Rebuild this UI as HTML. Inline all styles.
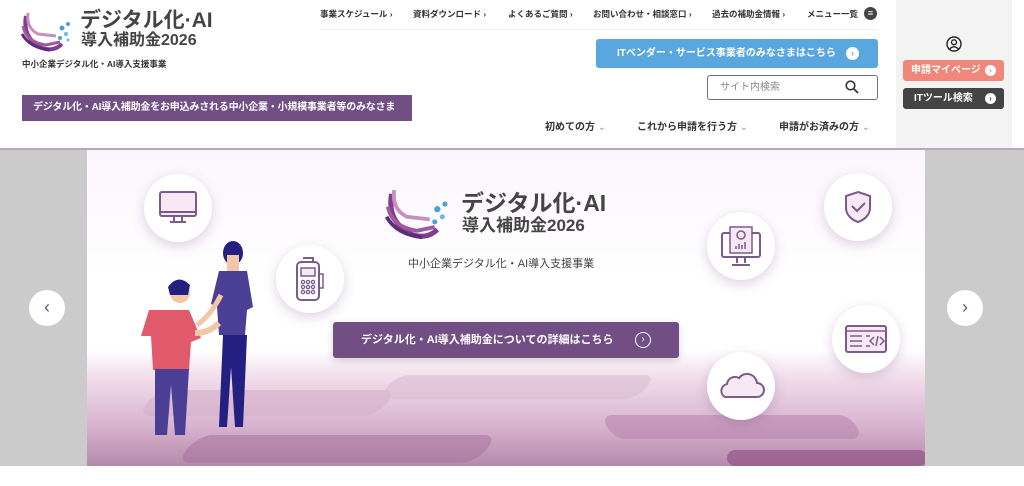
<!DOCTYPE html>
<html><head><meta charset="utf-8">
<style>
*{margin:0;padding:0;box-sizing:border-box}
body{width:1024px;height:486px;overflow:hidden;background:#fff;font-family:"Liberation Sans","Noto Sans CJK JP",sans-serif;color:#333;position:relative}
.a{position:absolute}
.top a{position:absolute;top:8px;font-size:8.5px;font-weight:bold;color:#333;white-space:nowrap}
.circ{position:absolute;background:#fff;border-radius:50%;box-shadow:0 4px 12px rgba(120,80,140,.25);display:flex;align-items:center;justify-content:center}
</style></head><body>
<svg class="a" style="left:20px;top:8px" width="52" height="46" viewBox="0 0 52 46">
<path d="M6 8 Q2 30 22 40 Q34 44 42 36" fill="none" stroke="#7d3f8f" stroke-width="4"/>
<path d="M3 18 Q6 34 26 37 L40 34" fill="none" stroke="#a0589e" stroke-width="3"/>
<path d="M8 5 Q6 20 18 26 L36 28" fill="none" stroke="#c88ec0" stroke-width="3"/>
<path d="M2 26 Q10 40 30 42" fill="none" stroke="#5a2e7a" stroke-width="3"/>
<circle cx="42" cy="20" r="2.5" fill="#4aa0d8"/><circle cx="48" cy="16" r="2" fill="#4aa0d8"/><circle cx="46" cy="26" r="2" fill="#6bbce6"/><circle cx="40" cy="30" r="2" fill="#4aa0d8"/><circle cx="48" cy="32" r="1.5" fill="#6bbce6"/>
</svg>
<div class="a" style="left:80px;top:9px;font-size:21px;font-weight:bold;color:#444;line-height:23px;white-space:nowrap">デジタル化·AI</div>
<div class="a" style="left:81px;top:32px;font-size:16px;font-weight:bold;color:#444;line-height:18px;white-space:nowrap">導入補助金2026</div>
<div class="a" style="left:22px;top:58px;font-size:8.5px;font-weight:bold;white-space:nowrap">中小企業デジタル化・AI導入支援事業</div>
<div class="a" style="left:22px;top:95px;width:390px;height:26px;background:#714e84;color:#fff;font-size:10px;letter-spacing:-0.2px;font-weight:bold;line-height:26px;padding-left:11px;white-space:nowrap;overflow:hidden">デジタル化・AI導入補助金をお申込みされる中小企業・小規模事業者等のみなさま</div>
<div class="top">
<a style="left:320px">事業スケジュール ›</a>
<a style="left:413px">資料ダウンロード ›</a>
<a style="left:508px">よくあるご質問 ›</a>
<a style="left:593px">お問い合わせ・相談窓口 ›</a>
<a style="left:712px">過去の補助金情報 ›</a>
<a style="left:807px">メニュー一覧</a>
</div>
<div class="a" style="left:864px;top:7px;width:13px;height:13px;border-radius:50%;background:#444;color:#fff;font-size:9px;text-align:center;line-height:13px">≡</div>
<div class="a" style="left:320px;top:29px;width:557px;height:1px;background:#eee"></div>
<div class="a" style="left:596px;top:39px;width:282px;height:29px;background:#5aa6df;border-radius:3px;color:#fff;font-size:10px;font-weight:bold;line-height:29px;padding-left:21px;white-space:nowrap">ITベンダー・サービス事業者のみなさまはこちら</div>
<div class="a" style="left:846px;top:47px;width:13px;height:13px;border-radius:50%;background:#fff;color:#5aa6df;font-size:9px;text-align:center;line-height:13px;font-weight:bold">›</div>
<div class="a" style="left:707px;top:75px;width:171px;height:25px;border:1px solid #7a6a85;border-radius:3px;font-size:10px;color:#888;line-height:23px;padding-left:12px">サイト内検索</div>
<svg class="a" style="left:845px;top:80px" width="14" height="14" viewBox="0 0 14 14"><circle cx="5.5" cy="5.5" r="4.3" fill="none" stroke="#333" stroke-width="1.6"/><path d="M9 9l4 4" stroke="#333" stroke-width="1.8"/></svg>
<div class="a" style="left:545px;top:118px;font-size:10px;font-weight:bold;white-space:nowrap">初めての方 <span style="color:#999;font-weight:normal">⌄</span></div>
<div class="a" style="left:637px;top:118px;font-size:10px;font-weight:bold;white-space:nowrap">これから申請を行う方 <span style="color:#999;font-weight:normal">⌄</span></div>
<div class="a" style="left:779px;top:118px;font-size:10px;font-weight:bold;white-space:nowrap">申請がお済みの方 <span style="color:#999;font-weight:normal">⌄</span></div>
<div class="a" style="left:896px;top:0;width:116px;height:148px;background:#f3f3f3"></div>
<svg class="a" style="left:946px;top:36px" width="16" height="16" viewBox="0 0 16 16"><circle cx="8" cy="8" r="7" fill="none" stroke="#222" stroke-width="1.4"/><circle cx="8" cy="6.3" r="2.5" fill="none" stroke="#222" stroke-width="1.3"/><path d="M3.5 13Q8 8.5 12.5 13" fill="none" stroke="#222" stroke-width="1.3"/></svg>
<div class="a" style="left:903px;top:60px;width:101px;height:21px;background:#f0877a;border-radius:3px;color:#fff;font-size:10px;font-weight:bold;line-height:21px;padding-left:8px">申請マイページ</div>
<div class="a" style="left:985px;top:65px;width:11px;height:11px;border-radius:50%;background:#fff;color:#f0877a;font-size:8px;text-align:center;line-height:11px;font-weight:bold">›</div>
<div class="a" style="left:903px;top:88px;width:101px;height:21px;background:#444;border-radius:3px;color:#fff;font-size:10px;font-weight:bold;line-height:21px;padding-left:11px">ITツール検索</div>
<div class="a" style="left:985px;top:93px;width:11px;height:11px;border-radius:50%;background:#fff;color:#444;font-size:8px;text-align:center;line-height:11px;font-weight:bold">›</div>
<div class="a" style="left:0;top:148px;width:1024px;height:2px;background:#b9a6c6"></div>
<div class="a" style="left:0;top:150px;width:1024px;height:316px;background:#cbcbcb"></div>
<div class="a" style="left:87px;top:150px;width:838px;height:316px;background:linear-gradient(#fbf6fb,#fff 40%);overflow:hidden">
 <div class="a" style="left:0;top:200px;width:838px;height:116px;background:linear-gradient(rgba(244,228,240,0),#f0dcea 25%,#d8b4cf 65%,#b58aab)"></div>
 <div class="a" style="left:60px;top:240px;width:240px;height:26px;background:#d6b0cc;border-radius:14px;transform:skewX(-40deg);opacity:.6"></div>
 <div class="a" style="left:300px;top:225px;width:260px;height:24px;background:#dcbcd4;border-radius:14px;transform:skewX(-40deg);opacity:.6"></div>
 <div class="a" style="left:520px;top:265px;width:250px;height:24px;background:#b47ea8;border-radius:14px;transform:skewX(30deg);opacity:.5"></div>
 <div class="a" style="left:100px;top:285px;width:300px;height:28px;background:#a4709a;border-radius:14px;transform:skewX(-40deg);opacity:.5"></div>
 <div class="a" style="left:640px;top:300px;width:200px;height:16px;background:#8a4a7e;border-radius:8px;opacity:.6"></div>
</div>
<div class="circ" style="left:144px;top:174px;width:68px;height:68px"><svg width="40" height="36" viewBox="0 0 40 36"><rect x="2" y="2" width="36" height="24" rx="2" fill="#f7e8f3" stroke="#7b5a8c" stroke-width="2"/><path d="M2 22h36M16 26v5M24 26v5M12 32h16" stroke="#7b5a8c" stroke-width="2"/></svg></div>
<div class="circ" style="left:276px;top:245px;width:68px;height:68px"><svg width="32" height="46" viewBox="0 0 32 46"><rect x="3" y="6" width="22" height="38" rx="4" fill="#fff" stroke="#7b5a8c" stroke-width="2"/><rect x="7" y="12" width="14" height="8" fill="#f7e8f3" stroke="#7b5a8c" stroke-width="1.5"/><path d="M9 2h10v4" fill="none" stroke="#7b5a8c" stroke-width="2"/><path d="M25 18h4v14h-4" fill="none" stroke="#7b5a8c" stroke-width="1.5"/><g fill="none" stroke="#7b5a8c" stroke-width="1.3"><circle cx="9" cy="26" r="1.6"/><circle cx="14" cy="26" r="1.6"/><circle cx="19" cy="26" r="1.6"/><circle cx="9" cy="31" r="1.6"/><circle cx="14" cy="31" r="1.6"/><circle cx="19" cy="31" r="1.6"/><circle cx="9" cy="36" r="1.6"/><circle cx="14" cy="36" r="1.6"/><circle cx="19" cy="36" r="1.6"/></g></svg></div>
<div class="circ" style="left:707px;top:212px;width:68px;height:68px"><svg width="42" height="42" viewBox="0 0 42 42"><rect x="2" y="8" width="38" height="24" rx="2" fill="#fff" stroke="#7b5a8c" stroke-width="2"/><rect x="10" y="2" width="22" height="26" fill="#f7e8f3" stroke="#7b5a8c" stroke-width="1.5"/><circle cx="21" cy="10" r="4" fill="none" stroke="#7b5a8c" stroke-width="1.5"/><path d="M16 24v-3M19 24v-5M22 24v-4M25 24v-7" stroke="#7b5a8c" stroke-width="1.5"/><path d="M17 32v6M25 32v6M12 40h18" stroke="#7b5a8c" stroke-width="2"/></svg></div>
<div class="circ" style="left:824px;top:173px;width:68px;height:68px"><svg width="28" height="34" viewBox="0 0 28 34"><path d="M14 2L26 6v12c0 7-6 12-12 14C8 30 2 25 2 18V6z" fill="#f7e8f3" stroke="#7b5a8c" stroke-width="2"/><path d="M8 16l5 5 8-8" fill="none" stroke="#7b5a8c" stroke-width="2"/></svg></div>
<div class="circ" style="left:832px;top:305px;width:68px;height:68px"><svg width="44" height="30" viewBox="0 0 44 30"><rect x="2" y="2" width="40" height="26" rx="2" fill="#f7e8f3" stroke="#7b5a8c" stroke-width="2"/><path d="M2 7h40M6 12h12M6 17h12M6 22h12M22 12h4M22 22h4M30 13l-4 4 4 4M36 13l4 4-4 4M34 12l-2 10" stroke="#7b5a8c" stroke-width="1.5" fill="none"/></svg></div>
<div class="circ" style="left:707px;top:352px;width:68px;height:68px"><svg width="48" height="26" viewBox="0 0 48 26"><path d="M8 24h32a7 7 0 0 0 0-14 10 10 0 0 0-18-5 8 8 0 0 0-12 6 7 7 0 0 0-2 13z" fill="#f7e8f3" stroke="#7b5a8c" stroke-width="2"/></svg></div>
<svg class="a" style="left:135px;top:235px" width="140" height="210" viewBox="0 0 140 210">
<ellipse cx="98" cy="18" rx="10" ry="12" fill="#232082"/><path d="M92 20h12v16h-12z" fill="#f1c7a8"/>
<path d="M84 36h28l6 36-6 3-2 25h-26l-2-28-6-3z" fill="#4a3f95"/><path d="M86 60q-10 20-24 30" stroke="#f1c7a8" stroke-width="5" fill="none"/>
<path d="M88 100h24l-4 92h-8l-4-60-4 60h-8z" fill="#232082"/>
<circle cx="45" cy="58" r="10" fill="#f1c7a8"/><path d="M33 52q10-14 22-2l-2 10h-18z" fill="#232082"/>
<path d="M14 75h40l12 28-10 4-2 28h-36l-2-34-10 0z" fill="#e15a6c"/><path d="M60 98q14 0 24-10" stroke="#f1c7a8" stroke-width="6" fill="none"/>
<path d="M20 134h34l-4 66h-10l-4-50-4 50h-12z" fill="#4a3f95"/>
</svg>
<div class="a" style="left:384px;top:183px"><svg width="66" height="60" viewBox="0 0 52 46"><path d="M6 8 Q2 30 22 40 Q34 44 42 36" fill="none" stroke="#7d3f8f" stroke-width="4"/><path d="M3 18 Q6 34 26 37 L40 34" fill="none" stroke="#a0589e" stroke-width="3"/><path d="M8 5 Q6 20 18 26 L36 28" fill="none" stroke="#c88ec0" stroke-width="3"/><path d="M2 26 Q10 40 30 42" fill="none" stroke="#5a2e7a" stroke-width="3"/><circle cx="42" cy="20" r="2.5" fill="#4aa0d8"/><circle cx="48" cy="16" r="2" fill="#4aa0d8"/><circle cx="46" cy="26" r="2" fill="#6bbce6"/><circle cx="40" cy="30" r="2" fill="#4aa0d8"/></svg></div>
<div class="a" style="left:461px;top:190px;font-size:23px;font-weight:bold;color:#444;line-height:26px;white-space:nowrap">デジタル化·AI</div>
<div class="a" style="left:462px;top:216px;font-size:17px;font-weight:bold;color:#444;line-height:20px;white-space:nowrap">導入補助金2026</div>
<div class="a" style="left:408px;top:255px;font-size:11px;color:#444;white-space:nowrap">中小企業デジタル化・AI導入支援事業</div>
<div class="a" style="left:333px;top:322px;width:346px;height:36px;background:#714e84;border-radius:3px;color:#fff;font-size:11px;font-weight:bold;line-height:36px;padding-left:28px;box-shadow:0 3px 8px rgba(0,0,0,.15);white-space:nowrap">デジタル化・AI導入補助金についての詳細はこちら</div>
<div class="a" style="left:635px;top:332px;width:16px;height:16px;border-radius:50%;border:1.3px solid #fff;color:#fff;font-size:10px;text-align:center;line-height:13px">›</div>
<div class="a" style="left:29px;top:290px;width:36px;height:36px;border-radius:50%;background:#fff;color:#714e84;font-size:18px;text-align:center;line-height:34px">‹</div>
<div class="a" style="left:947px;top:290px;width:36px;height:36px;border-radius:50%;background:#fff;color:#714e84;font-size:18px;text-align:center;line-height:34px">›</div>
</body></html>
